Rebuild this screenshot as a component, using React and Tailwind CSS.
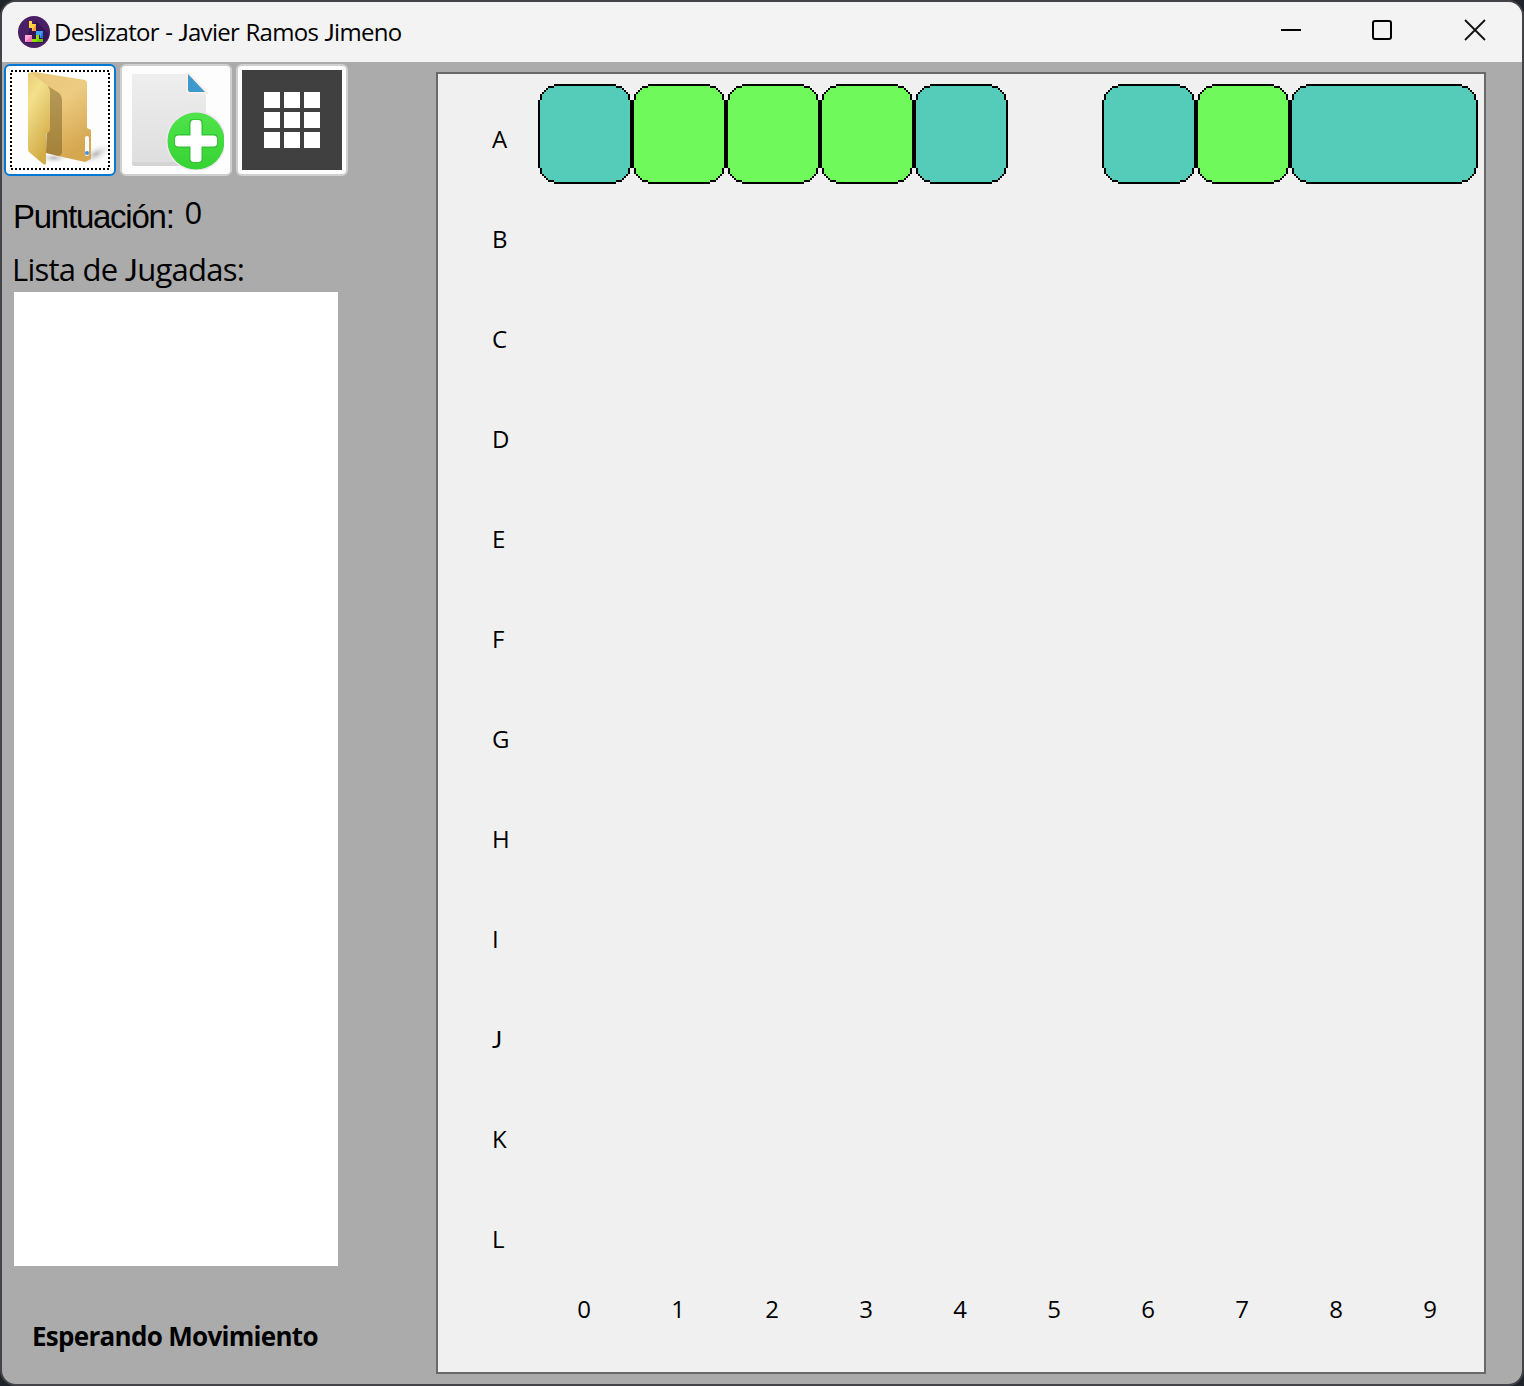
import React from "react";

const SANS = "font-['Open_Sans','Noto_Sans',sans-serif]";
const STEPS = [[8, 0], [5, 1], [4, 2], [3, 3], [2, 4], [1, 5], [0, 8]];
const INNER = [[8, 1], [5, 2], [4, 3], [3, 4], [2, 5], [1, 8]];
const TEAL = "#55ccba";
const GREEN = "#6ff95b";

const ROWS = "ABCDEFGHIJKL".split("");
const COLS = [0, 1, 2, 3, 4, 5, 6, 7, 8, 9];
const PIECES = [
  { color: TEAL, span: 1 },
  { color: GREEN, span: 1 },
  { color: GREEN, span: 1 },
  { color: GREEN, span: 1 },
  { color: TEAL, span: 1 },
  { color: null, span: 1 },
  { color: TEAL, span: 1 },
  { color: GREEN, span: 1 },
  { color: TEAL, span: 2 },
];

function Piece({ color, span }) {
  const w = 47 * span;
  if (!color) return <div className="w-[94px] shrink-0" />;
  return (
    <svg width={w * 2} height="100" viewBox={`0 0 ${w} 50`} shapeRendering="crispEdges" className="shrink-0">
      {STEPS.map(([x, y]) => (
        <rect key={`o${x}`} x={x} y={y} width={w - 2 * x} height={50 - 2 * y} fill="#000" />
      ))}
      {INNER.map(([x, y]) => (
        <rect key={`i${x}`} x={x} y={y} width={w - 2 * x} height={50 - 2 * y} fill={color} />
      ))}
    </svg>
  );
}

// Capital J that sits on the baseline
function J() {
  return <span className="font-['Lato',sans-serif]">J</span>;
}

function AppIcon() {
  return (
    <svg width="32" height="32" viewBox="0 0 32 32">
      <circle cx="16" cy="16" r="16" fill="#4b1f66" />
      <path d="M18 5 L31 18 A16 16 0 0 1 30 22 L25 27 L7 27 L12 12Z" fill="#371552" />
      <path d="M11 5h3v3h4v7h-4v-3h-3z" fill="#ffd53d" />
      <path d="M18 8v7h-4z" fill="#ff9a3c" />
      <path d="M18 15h7v7h-3v-3h-4z" fill="#3ba0f5" />
      <path d="M25 15v7h-3z" fill="#2b6fe0" />
      <path d="M7 19h7v7H7z" fill="#ffa6dc" />
      <path d="M14 19v7H7z" fill="#f576b5" />
      <path d="M18 19h3v4h4v3H14v-3h4z" fill="#8ee000" />
      <path d="M21 23h4v3h-7z" fill="#6cc400" />
    </svg>
  );
}

function FolderIcon() {
  return (
    <svg width="104" height="104" viewBox="0 0 104 104">
      <defs>
        <linearGradient id="front" x1="0" y1="0" x2="0.4" y2="1">
          <stop offset="0" stopColor="#e9ce74" />
          <stop offset="0.3" stopColor="#f3e08c" />
          <stop offset="1" stopColor="#d3ac48" />
        </linearGradient>
        <linearGradient id="back" x1="0" y1="0" x2="0.5" y2="1">
          <stop offset="0" stopColor="#e8c67a" />
          <stop offset="0.45" stopColor="#edcc82" />
          <stop offset="1" stopColor="#d5a750" />
        </linearGradient>
        <linearGradient id="fold" x1="0" y1="0" x2="0" y2="1">
          <stop offset="0" stopColor="#b59a58" />
          <stop offset="1" stopColor="#a58138" />
        </linearGradient>
        <radialGradient id="shade">
          <stop offset="0" stopColor="#b7b7b7" />
          <stop offset="1" stopColor="#fff" stopOpacity="0" />
        </radialGradient>
      </defs>
      <ellipse cx="88" cy="86" rx="19" ry="9" fill="url(#shade)" transform="rotate(-28 88 86)" />
      <ellipse cx="46" cy="90" rx="16" ry="6" fill="url(#shade)" />
      <path d="M20 6 Q21 4 27 4 L77 12 Q79 13 79 15 L79 60 L83 62 L83 91 L77 94 L50 88 L41 25Z" fill="url(#back)" />
      <path d="M40 18 L51 25 Q54 28 54 33 L54 85 Q53 88 50 88 L38 85Z" fill="url(#fold)" />
      <path d="M20 6 Q21 4 24 6 L39 17 Q42 20 42 25 L42 61 Q42 64 38 66 L38 95 Q37 98 34 95 L21 84 Q20 83 20 80Z" fill="url(#front)" />
      <rect x="77" y="68" width="4" height="20" rx="2" fill="#f8fbff" />
      <circle cx="79" cy="85" r="2" fill="#3e8ff0" />
    </svg>
  );
}

function NewFileIcon() {
  return (
    <svg width="104" height="104" viewBox="0 4 104 104">
      <defs>
        <linearGradient id="page" x1="0" y1="0" x2="0" y2="1">
          <stop offset="0" stopColor="#eeeeee" />
          <stop offset="1" stopColor="#dedede" />
        </linearGradient>
        <linearGradient id="add" x1="0" y1="0" x2="0" y2="1">
          <stop offset="0" stopColor="#4fe44b" />
          <stop offset="1" stopColor="#36d334" />
        </linearGradient>
        <clipPath id="frame">
          <rect x="2" y="6" width="98" height="100" />
        </clipPath>
      </defs>
      <g clipPath="url(#frame)">
        <path d="M9 10H64V28H82V102H11Q8 102 8 99V12Q8 10 9 10Z" fill="url(#page)" />
        <path d="M9 98H60V102H11Q8 102 8 99Z" fill="#d4d4d4" />
        <path d="M62 9H66L84 28V30H65Q62 30 62 27Z" fill="#f8eeea" />
        <path d="M64 10L81 28H66Q64 28 64 26Z" fill="#3d9acb" />
        <circle cx="72" cy="77" r="30" fill="#f2e4f4" />
        <circle cx="72" cy="77" r="28.5" fill="url(#add)" />
        <g fill="#35c534">
          <rect x="65" y="55" width="14" height="44" rx="4" />
          <rect x="50" y="70" width="44" height="14" rx="4" />
        </g>
        <g fill="#fff">
          <rect x="66.5" y="56" width="11" height="42" rx="3.5" />
          <rect x="51" y="71.5" width="42" height="11" rx="3.5" />
        </g>
      </g>
    </svg>
  );
}

function ToolButton({ active, children }) {
  return (
    <button
      className={
        active
          ? "flex size-[112px] items-center justify-center rounded-[6px] border-2 border-[#0078d4] bg-[#fdfdfd]"
          : "flex size-[112px] items-center justify-center overflow-hidden rounded-[6px] border-2 border-[#d0d0d0] bg-[#fdfdfd]"
      }
    >
      {children}
    </button>
  );
}

export default function App() {
  return (
    <div className={`h-[1386px] w-[1524px] overflow-hidden bg-[#1f232b] text-black ${SANS}`}>
      <div className="flex h-full w-full flex-col overflow-hidden rounded-[16px] border-2 border-[#444348] bg-[#ababab]">
        <header className="flex h-[60px] shrink-0 items-center bg-[#f3f3f3] pl-4">
          <AppIcon />
          <span className="ml-[4px] whitespace-nowrap text-[24px] leading-8 tracking-[-0.7px] [word-spacing:0.8px]">
            Deslizator - <J />avier Ramos <J />imeno
          </span>
          <div className="ml-auto flex items-center gap-[70px] pr-[36px]">
            <svg width="22" height="22" viewBox="0 0 22 22" className="-mt-1">
              <path d="M1 11H21" stroke="#000" strokeWidth="2" />
            </svg>
            <svg width="22" height="22" viewBox="0 0 22 22" className="-mt-1" fill="none">
              <rect x="1" y="2" width="18" height="18" rx="2" stroke="#000" strokeWidth="2" />
            </svg>
            <svg width="22" height="22" viewBox="0 0 22 22" className="-mt-1">
              <path d="M1 1L21 21M21 1L1 21" stroke="#111" strokeWidth="1.8" />
            </svg>
          </div>
        </header>

        <div className="flex min-h-0 flex-1">
          <aside className="flex w-[434px] shrink-0 flex-col">
            <div className="flex gap-[4px] pl-[2px] pt-[2px]">
              <ToolButton active>
                <div className="relative flex size-[104px] items-center justify-center">
                  <FolderIcon />
                  <svg className="absolute inset-0" width="104" height="104" fill="none" shapeRendering="crispEdges">
                    <rect x="3" y="3" width="98" height="98" stroke="#000" strokeWidth="2" strokeDasharray="2 2" />
                  </svg>
                </div>
              </ToolButton>
              <ToolButton>
                <NewFileIcon />
              </ToolButton>
              <ToolButton>
                <div className="grid size-[100px] grid-cols-[16px_16px_16px] grid-rows-[16px_16px_16px] place-content-center gap-[4px] bg-[#404040]">
                  {COLS.slice(0, 9).map((n) => (
                    <span key={n} className="bg-white" />
                  ))}
                </div>
              </ToolButton>
            </div>
            <div className="mt-[19px] flex h-[42px] items-start pl-[11px]">
              <span className="mt-[3px] whitespace-nowrap font-['Liberation_Sans',sans-serif] text-[33px] leading-[38px] tracking-[-1.25px]">
                Puntuación:
              </span>
              <span className="-mt-px ml-[11px] text-[31px] leading-[36px]">0</span>
            </div>
            <div className="mt-[11px] h-[44px] whitespace-nowrap pl-[10px] text-[31px] leading-[42px] tracking-[-0.75px]">
              Lista de <J />ugadas:
            </div>
            <div className="ml-[12px] h-[974px] w-[324px] shrink-0 bg-white" />
            <div className="mt-[52px] whitespace-nowrap pl-[30px] text-[26px] font-bold leading-[36px] tracking-[-0.7px]">
              Esperando Movimiento
            </div>
          </aside>

          <main className="mt-[10px] flex h-[1302px] w-[1050px] flex-col border-2 border-[#696969] bg-[#f0f0f0] pt-[10px] text-[24px] leading-8">
            {ROWS.map((row) => (
              <div key={row} className="flex h-[100px] shrink-0">
                <div className="w-[100px] shrink-0 pl-[54px] pt-[39px]">{row === "J" ? <J /> : row}</div>
                {row === "A" && PIECES.map((p, i) => <Piece key={i} {...p} />)}
              </div>
            ))}
            <div className="flex pl-[100px] pt-[9px]">
              {COLS.map((n) => (
                <div key={n} className="w-[94px] shrink-0 pr-[2px] text-center">
                  {n}
                </div>
              ))}
            </div>
          </main>
        </div>
      </div>
    </div>
  );
}
